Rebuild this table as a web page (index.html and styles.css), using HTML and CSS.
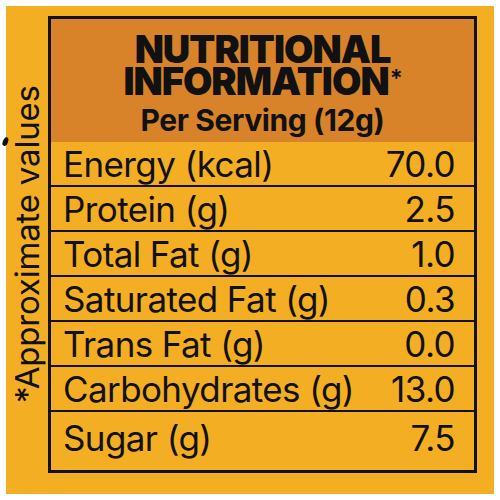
FILE: index.html
```html
<!DOCTYPE html>
<html lang="en">
<head>
  <meta charset="UTF-8" />
  <title>Nutritional Information</title>
  <link rel="stylesheet" href="styles.css">
</head>
<body>
  <div class="label-panel">
    <span class="print-tick"></span>
    <div class="side-note">*Approximate values</div>

    <div class="facts-box">
      <div class="facts-head">
        <div class="facts-title">NUTRITIONAL<br />INFORMATION<sup>*</sup></div>
        <div class="facts-serving">Per Serving (12g)</div>
      </div>

      <div class="facts-row"><span>Energy (kcal)</span><span>70.0</span></div>
      <div class="facts-row"><span>Protein (g)</span><span>2.5</span></div>
      <div class="facts-row"><span>Total Fat (g)</span><span>1.0</span></div>
      <div class="facts-row"><span>Saturated Fat (g)</span><span>0.3</span></div>
      <div class="facts-row"><span>Trans Fat (g)</span><span>0.0</span></div>
      <div class="facts-row"><span>Carbohydrates (g)</span><span>13.0</span></div>
      <div class="facts-row"><span>Sugar (g)</span><span>7.5</span></div>
    </div>
  </div>
</body>
</html>
```

FILE: styles.css
```css
body {
  margin: 0;
  background: #ffffff;
  font-family: 'Inter', 'Lato', sans-serif;
  color: #111;
}

.label-panel {
  position: relative;
  margin: 6px;
  width: 488px;
  height: 488px;
  box-sizing: border-box;
  background: #f4ae24;
  padding: 10px 17px 21px 0;
  display: flex;
}

/* little ink mark at the left edge */
.print-tick {
  position: absolute;
  left: -3px;
  top: 131px;
  width: 5px;
  height: 9px;
  background: #111;
  border-radius: 50% 50% 40% 40%;
  transform: rotate(20deg);
}

/* Rotated footnote on the left */
.side-note {
  width: 42px;
  display: flex;
  align-items: center;
  justify-content: center;
  writing-mode: vertical-rl;
  transform: rotate(180deg);
  font-size: 33px;
  line-height: 34px;
  letter-spacing: -0.2px;
  white-space: nowrap;
}

.facts-box {
  flex: 1;
  border: 3px solid #111;
  display: flex;
  flex-direction: column;
}

.facts-head {
  height: 123px;
  box-sizing: border-box;
  background: #d8832a;
  text-align: center;
  padding-top: 14px;
}

.facts-title {
  font-weight: 900;
  font-size: 38px;
  line-height: 32px;
  letter-spacing: -1px;
}

.facts-title sup {
  font-size: 24px;
  font-weight: 600;
  vertical-align: 8px;
  line-height: 0;
  margin-left: 1px;
}

.facts-serving {
  font-weight: 700;
  font-size: 30px;
  letter-spacing: -0.4px;
  margin-top: 5px;
}

.facts-row {
  height: 45px;
  box-sizing: border-box;
  border-bottom: 2px solid #111;
  padding: 0 19px 0 12px;
  display: flex;
  justify-content: space-between;
  align-items: center;
  font-size: 35px;
  letter-spacing: -0.6px;
}

.facts-row:first-of-type {
  height: 54px;
  padding-top: 11px;
}

.facts-row:last-child {
  flex: 1;
  border-bottom: none;
  padding-bottom: 6px;
}
```
